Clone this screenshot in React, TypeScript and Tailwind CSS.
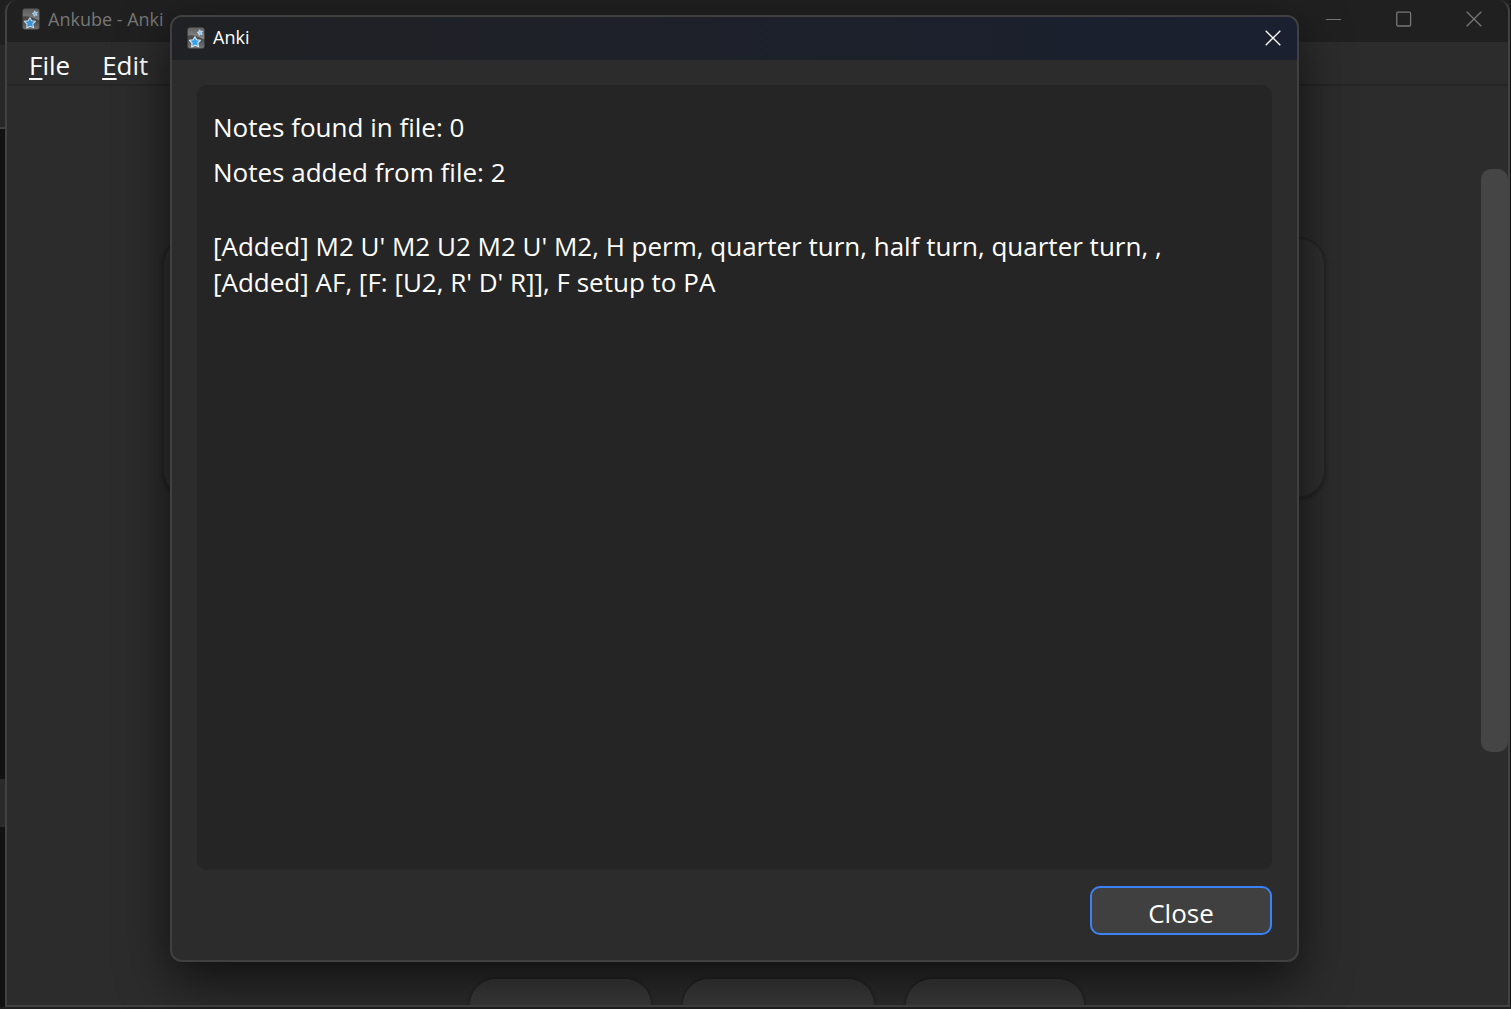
import React from "react";

function AnkiIcon({ dim = false }: { dim?: boolean }) {
  return (
    <svg viewBox="0 0 18 22" className={dim ? "h-[22px] w-[18px] shrink-0 opacity-90" : "h-[22px] w-[18px] shrink-0"} aria-hidden="true">
      <defs>
        <linearGradient id="card" x1="0" y1="0" x2="0" y2="1">
          <stop offset="0" stopColor="#444444" />
          <stop offset="0.6" stopColor="#505050" />
          <stop offset="1" stopColor="#7a7a7a" />
        </linearGradient>
        <linearGradient id="gloss" x1="0" y1="0" x2="0" y2="1">
          <stop offset="0" stopColor="#626262" />
          <stop offset="1" stopColor="#8c8c8c" />
        </linearGradient>
      </defs>
      <rect x="0.5" y="0.5" width="17" height="21" rx="2.5" fill="url(#card)" stroke="#3c3c3c" strokeWidth="0.6" />
      <path d="M.8 3A2.200 2.200 0 0 1 3 .8h12A2.200 2.200 0 0 1 17.200 3v9C13 11.500 9 7.500 .8 8.500Z" fill="url(#gloss)" />
      <path d="m8 9.800 1.600 3 3.800.5-2.600 2.700.8 3.700-3.500-1.500-3.400 1.700.3-3.900L2.300 13.400l3.800-.7Z" fill="#3aa0ec" stroke="#d8ecfb" strokeWidth="1.100" strokeLinejoin="round" />
      <path d="m12.600 2.800 1 1.500 1.900-.1-1 1.600.7 1.700-1.800-.4-1.400 1.200-.2-1.900-1.600-.9 1.700-.8Z" fill="#8ccbf8" stroke="#cfe8fb" strokeWidth="0.800" strokeLinejoin="round" />
    </svg>
  );
}

function CrossIcon() {
  return (
    <svg viewBox="0 0 16 16" className="size-4" fill="none" stroke="currentColor" strokeWidth="1.300" aria-hidden="true">
      <path d="m.7.700 14.600 14.600M15.300.700.700 15.300" />
    </svg>
  );
}

function MenuItem({ label }: { label: string }) {
  return (
    <button type="button" className="text-[26px] leading-9 text-white">
      <span className="underline decoration-2 underline-offset-3">{label[0]}</span>
      {label.slice(1)}
    </button>
  );
}

const deckButtons = ["w-[181px]", "w-[191px]", "w-[178px]"];

function MainWindow() {
  return (
    <main className="flex min-w-0 flex-1 flex-col overflow-hidden rounded-t-xl border-x-2 border-b-2 border-[#424242] bg-[#2c2c2c]">
      <header className="flex h-[42px] shrink-0 items-center bg-[#202020] pb-1 pl-[15px] text-[#777777]">
        <AnkiIcon dim />
        <h1 className="ml-2 flex-1 text-[18px]">Ankube - Anki</h1>
        <div className="flex items-center gap-[54px] pr-[26px]">
          <button type="button" aria-label="Minimize">
            <svg viewBox="0 0 16 16" className="size-4" stroke="currentColor" aria-hidden="true"><path d="M0 8.500h15" /></svg>
          </button>
          <button type="button" aria-label="Maximize">
            <svg viewBox="0 0 16 16" className="size-4" fill="none" stroke="currentColor" strokeWidth="1.300" aria-hidden="true"><rect x=".8" y="1.200" width="13.800" height="13.800" rx="1.200" /></svg>
          </button>
          <button type="button" aria-label="Close window"><CrossIcon /></button>
        </div>
      </header>
      <nav className="flex h-11 shrink-0 items-center gap-8 border-b-2 border-[#252525] pt-1 pl-[22px]">
        <MenuItem label="File" />
        <MenuItem label="Edit" />
      </nav>
      <div className="flex min-h-0 flex-1">
        <div className="flex flex-1 flex-col justify-between pt-[151px]">
          <div className="mx-[155px] h-[261px] rounded-[27px] border-2 border-[#252525] bg-[#2f2f2f] shadow-[0_2px_3px_#00000040]" />
          <div className="flex justify-center gap-8 pl-[66px]">
            {deckButtons.map((width) => (
              <div key={width} className={`h-[26px] rounded-t-[28px] bg-linear-to-b from-[#3c3c3c] to-[#383838] shadow-[0_0_3px_1px_#00000050] ${width}`} />
            ))}
          </div>
        </div>
        <div className="w-[27px] shrink-0 pt-[83px]">
          <div className="h-[583px] rounded-[10px] bg-[#454545]" />
        </div>
      </div>
    </main>
  );
}

function ImportDialog() {
  return (
    <section role="dialog" aria-labelledby="dialog-title" className="absolute top-[15px] right-[212px] bottom-[47px] left-[170px] flex flex-col overflow-hidden rounded-xl border-2 border-[#404040] bg-[#2c2c2c] shadow-[0_18px_50px_#000000a0]">
      <header className="flex h-[43px] shrink-0 items-center bg-linear-to-r from-[#202124] to-[#1a2030] pr-4 pb-0.5 pl-[15px] text-white">
        <AnkiIcon />
        <h2 id="dialog-title" className="ml-2 flex-1 text-[18px]">Anki</h2>
        <button type="button" aria-label="Close dialog"><CrossIcon /></button>
      </header>
      <div className="flex min-h-0 flex-1 flex-col p-[25px]">
        <div className="flex-1 rounded-[10px] bg-[#252525] px-4 pt-6 text-[26px] leading-9 text-white">
          <p>Notes found in file: 0</p>
          <p className="mt-[9px]">Notes added from file: 2</p>
          <p className="mt-[38px]">[Added] M2 U' M2 U2 M2 U' M2, H perm, quarter turn, half turn, quarter turn, ,</p>
          <p>[Added] AF, [F: [U2, R' D' R]], F setup to PA</p>
        </div>
        <button type="button" className="mt-4 h-[49px] w-[182px] self-end rounded-[10px] border-2 border-[#3b82f6] bg-[#404040] pt-1 text-[26px] leading-9 text-white">Close</button>
      </div>
    </section>
  );
}

export default function App() {
  return (
    <div className="relative flex h-screen overflow-hidden bg-[#202020] pb-0.5 font-['Open_Sans',sans-serif]">
      <div className="flex w-[5px] shrink-0 flex-col bg-[#121212]">
        <div className="h-[45px] bg-[#202020]" />
        <div className="h-[84px] border-b-2 border-[#404040] bg-[#282828]" />
        <div className="mt-[650px] h-12 bg-[#2b2b2b]" />
      </div>
      <MainWindow />
      <div className="w-px shrink-0 bg-[#121212]" />
      <ImportDialog />
    </div>
  );
}
